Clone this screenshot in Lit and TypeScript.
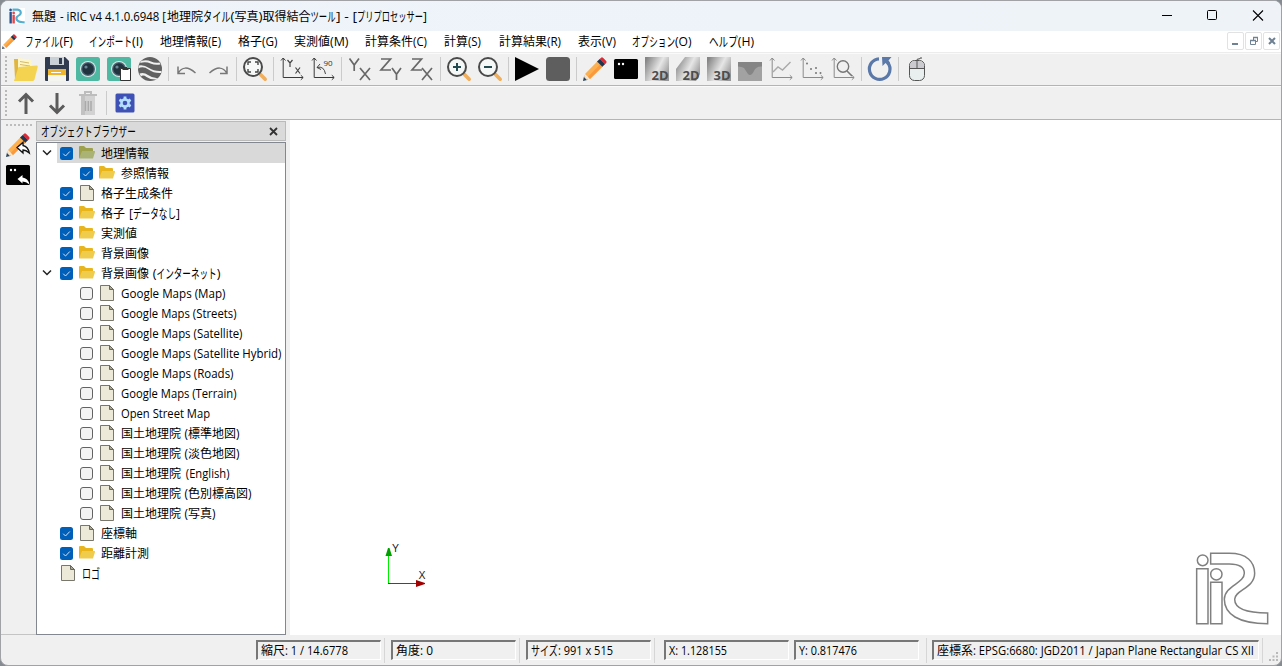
import { LitElement, html, svg, css, nothing, TemplateResult } from 'lit';
import { customElement } from 'lit/decorators.js';

type Run = [string, number, number]; // text, x, width

const isKanji = (c: string) => /[\u4e00-\u9fff]/.test(c);
const isKana = (c: string) => /[\u3040-\u30ff]/.test(c);

/** Splits a label by script, so that kana is set tighter than kanji. */
function runsOf(text: string, total: number, kana = 8.6): Run[] {
  const parts: { t: string; k: number }[] = [];
  for (const c of text) {
    const k = isKanji(c) ? 0 : isKana(c) ? 1 : 2;
    const last = parts[parts.length - 1];
    if (last && last.k === k) last.t += c;
    else parts.push({ t: c, k });
  }
  const count = (k: number) => parts.filter((p) => p.k === k).reduce((n, p) => n + p.t.length, 0);
  const rest = total - count(0) * 12;
  const latin = count(2);
  const kanaW = latin ? kana : rest / (count(1) || 1);
  const latinW = latin ? (rest - count(1) * kanaW) / latin : 0;
  let x = 0;
  return parts.map((p) => {
    const w = p.t.length * (p.k === 0 ? 12 : p.k === 1 ? kanaW : latinW);
    const lead = p.t.startsWith(' ') ? latinW : 0;
    const trail = p.t.endsWith(' ') ? latinW : 0;
    const r: Run = [p.t.trim(), x + lead, w - lead - trail];
    x += w;
    return r;
  });
}

function label(runs: Run[], width: number) {
  return html`<svg class="label" width=${width + 2} height="20">
    ${runs.map(([t, x, w]) => isKana(t[0])
      ? svg`<text class="kana" transform="translate(${x} 14.7) scale(${w / (t.length * 13)} 1)">${t}</text>`
      : svg`<text x=${x} y="14.5" textLength=${w} lengthAdjust="spacingAndGlyphs">${t}</text>`)}
  </svg>`;
}
const fit = (text: string, width: number, kana?: number) => label(runsOf(text, width, kana), width);

const pencil = svg`<g><path d="M0 24 1.2 18.6 5.2 22.8Z" fill="#2c4358"/><path d="M1.6 17.4 6.4 22.2 3.8 22.9 1 20Z" fill="#f5e3c8"/>
  <path d="M2 17 14.5 4.2 19.6 9.4 7 22Z" fill="#fcb04f"/><path d="M5 19.8 17.2 7.2 19.6 9.4 7 22Z" fill="#fa9a3c"/>
  <path d="M14 4.6 17 1.8 22.2 7 19.4 9.8Z" fill="#20344e"/><path d="M16.8 2 18 .8Q19-.2 20 .8L23.2 4Q24 5 23.2 6L22 7.2Z" fill="#dc2b37"/></g>`;
const terminal = svg`<rect y="2" width="24" height="20" rx="1.5" fill="#000"/><circle cx="5" cy="7" r="1.2" fill="#fff"/><circle cx="9" cy="7" r="1.2" fill="#fff"/>`;
const camera = svg`<rect width="24" height="24" rx="2.5" fill="#4fb8a2"/><circle cx="12" cy="12" r="8" fill="#dce8e8"/><circle cx="12" cy="12" r="7" fill="#4d6777"/><circle cx="12" cy="12" r="5.7" fill="#20333f"/><circle cx="10" cy="10" r="1.6" fill="#6b8796"/>`;
const lens = svg`<path d="m17 17 5.200 5.200" stroke="#f1ae5b" stroke-width="3.6" stroke-linecap="round"/><circle cx="10" cy="10" r="9" fill="#f6f8f8" stroke="#4a4a4a" stroke-width="2"/>`;
const axes = (c: string) => svg`<path d="M3.2 1V20.500H23M1 3.500 3.200 1 5.500 3.500M20.800 18.200 23.200 20.500 20.800 22.800" fill="none" stroke=${c} stroke-width="1"/>`;
const replyOutline = svg`<path d="M11 14.500 17 9.500V12.500Q22 13.500 23.300 20Q20 17 17 17V20Z" fill="#fff" stroke="#111" stroke-width="1.300"/>`;
const letters = (a: string, b: string) => svg`
  ${a === 'Y' ? svg`<path d="M1.500 1.500 6.200 8 11 1.500M6.200 8V14"/>` : svg`<path d="M2 2H11.500L2 13H12"/>`}
  ${b === 'X' ? svg`<path d="M12 11 22 23M22 11 12 23"/>` : svg`<path d="M13 11 17.500 17.200 22 11M17.500 17V23"/>`}`;
const cube = (t: string, shape: string) => svg`<path d=${shape} fill="url(#metal)"/>
  <text x="6.500" y="23.200" textLength="17" lengthAdjust="spacingAndGlyphs" class="dim">${t}</text>`;

const ICONS: Record<string, TemplateResult> = {
  open: svg`<path d="M0 2H7L9 5H15V22H1Z" fill="#e0b63f"/><path d="M4 1 17 3 20 19H4Z" fill="#fff6c5"/><path d="M6 4.500 15 6M6 7.500 16 9" stroke="#d5b96a"/><path d="M0 24 4.500 10 23 8.500Q24 8.500 23.700 10L20.500 22.500Q20 24 18 24Z" fill="#f3d34f"/>`,
  save: svg`<path d="M0 1Q0 0 1 0H20L24 4V23Q24 24 23 24H1Q0 24 0 23Z" fill="#303b50"/><path d="M5 0H19V8H5Z" fill="#c9d0d6"/><path d="M14 1H17V7H14Z" fill="#303b50"/><path d="M3 12H21V24H3Z" fill="#f5f5f0"/><path d="M3 12H21V18H3Z" fill="#efb52d"/><path d="M6 15.500H16" stroke="#fff"/>`,
  cam: camera,
  camdoc: svg`${camera}<path d="M13.500 11.500H23.500V23.500H13.500Z" fill="#fff" stroke="#333"/><path d="M15.500 11H21.500V13H15.500ZM17 10H20V11H17Z" fill="#333"/>`,
  globe: svg`<circle cx="12" cy="12" r="12" fill="#616161"/><path d="M3.500 3.800Q9 2.500 13 4.500T21.500 5.500L22.500 7.500Q17 8.500 12.500 6.500T2 6Z" fill="#f0f0f0"/><path d="M.7 8.500Q6 7.500 11 11T23.500 14L23.200 16Q16 16.500 10.500 12.500T.3 11.500Z" fill="#f0f0f0"/><path d="M1.500 16.500Q6 15 10 18T19.500 21.200L17.500 22.600Q12 22.500 8.500 20T3 19.500Z" fill="#f0f0f0"/>`,
  undo: svg`<path d="M3 16.500Q9 6 20.500 16M3 9.500V16.500H10" fill="none" stroke="#777" stroke-width="1.500"/>`,
  redo: svg`<path d="M21 16.500Q15 6 3.500 16M21 9.500V16.500H14" fill="none" stroke="#777" stroke-width="1.500"/>`,
  fit: svg`${lens}<path d="M5 8V5H8M12 5H15V8M15 12V15H12M8 15H5V12" fill="none" stroke="#444" stroke-width="1.400"/>`,
  axis: svg`${axes('#3a3a3a')}<path d="M7.500 3 10 6 12.500 3M10 6V10M15.500 10.500 20 16.500M20 10.500 15.500 16.500" fill="none" stroke="#444" stroke-width="1.200"/>`,
  rot: svg`${axes('#3a3a3a')}<path d="M6 10.500Q13 8.500 14.500 17M9 7 6 10.500 10 12.500" fill="none" stroke="#444"/><text x="12.500" y="9" class="deg">90</text>`,
  yx: svg`<g class="axl">${letters('Y', 'X')}</g>`,
  zy: svg`<g class="axl">${letters('Z', 'Y')}</g>`,
  zx: svg`<g class="axl">${letters('Z', 'X')}</g>`,
  zin: svg`${lens}<path d="M6 10H14M10 6V14" stroke="#244b50" stroke-width="2"/>`,
  zout: svg`${lens}<path d="M6 10H14" stroke="#244b50" stroke-width="2"/>`,
  play: svg`<path d="M0 0 24 12 0 24Z" fill="#000"/>`,
  stop: svg`<rect width="24" height="24" rx="3.500" fill="#5e5e5e"/>`,
  pencil,
  term: terminal,
  d2: cube('2D', 'M0 0H24V24H0Z'),
  d2b: cube('2D', 'M9 0H24V17L20 24H0V12Z'),
  d3: cube('3D', 'M0 0H24V24H0Z'),
  profile: svg`<rect y="5" width="24" height="19" fill="#a2a2a2"/><path d="M0 5H24V9.500Q18 9 16 14Q13 20 10 17Q8 14 6 11Q4 9.500 0 9.500Z" fill="#858585"/>`,
  line: svg`${axes('#8b8b8b')}<path d="M4 15 9 10 13.500 13 21.500 5" fill="none" stroke="#aaa" stroke-width="1.400"/>`,
  dots: svg`${axes('#8b8b8b')}<g fill="#777"><circle cx="7" cy="6.500" r="1"/><circle cx="11" cy="12" r="1"/><circle cx="16" cy="11" r="1"/><circle cx="16" cy="16" r="1"/><circle cx="20.500" cy="16" r="1"/></g>`,
  look: svg`${axes('#8b8b8b')}<circle cx="12" cy="9.500" r="5.700" fill="none" stroke="#777" stroke-width="1.400"/><path d="m16 14 5 5" stroke="#777" stroke-width="1.600"/>`,
  reload: svg`<path d="M11 1.800A10.300 10.300 0 1 0 20 6" fill="none" stroke="#5a78a8" stroke-width="3.200"/><path d="M14 0H23.500L20.500 3.500 22 5.500 19.500 8 17.500 6 14.500 9Z" fill="#5a78a8"/>`,
  mouse: svg`<path d="M12 4V3Q12 2 13 2H14Q15 2 15 1H17" fill="none" stroke="#444"/><rect x="4.500" y="3.500" width="15" height="20" rx="5" fill="#e8efee" stroke="#555"/><path d="M5 11V8Q6 4 10 4H14Q18 4 19 8V11Z" fill="#cbcbcf"/><path d="M4.500 11.500H19.500M12 4V11" stroke="#555"/>`,
  up: svg`<path d="M12 23V4M5 10.500 12 3.500 19 10.500" fill="none" stroke="#5b5b5b" stroke-width="3"/>`,
  down: svg`<path d="M12 2V21M5 14.500 12 21.500 19 14.500" fill="none" stroke="#5b5b5b" stroke-width="3"/>`,
  trash: svg`<path d="M5 5H19V24H5Z" fill="#d2d2d2"/><path d="M5 5H9V24H5Z" fill="#c2c2c2"/><path d="M3 4H21M9 3.500V1H15V3.500" fill="none" stroke="#bdbdbd" stroke-width="2"/><path d="M9.500 10V20M12.300 10V20M15 10V20" stroke="#aaa" stroke-width="1.500"/>`,
  gear: svg`<rect x="2.500" y="2.500" width="19" height="19" rx="1.500" fill="#3f51b5"/><path d="M12 5.500V18.500M6.400 8.750 17.600 15.250M17.600 8.750 6.400 15.250" stroke="#b3e0ff" stroke-width="2.800"/><circle cx="12" cy="12" r="4.800" fill="#b3e0ff"/><circle cx="12" cy="12" r="2.300" fill="#3f51b5"/>`,
  pencilBack: svg`${pencil}${replyOutline}`,
  termBack: svg`${terminal}<path d="M11.500 16 16.500 12V14.500Q22 15 23.500 21.500Q20 18.500 16.500 18.500V20.500Z" fill="#fff"/>`,
};

const BAR1 = ['open', 'save', 'cam', 'camdoc', 'globe', '|', 'undo', 'redo', '|', 'fit', '|', 'axis', 'rot', '|', 'yx', 'zy', 'zx', '|', 'zin', 'zout', '|', 'play', 'stop', '|', 'pencil', 'term', 'd2', 'd2b', 'd3', 'profile', 'line', 'dots', 'look', '|', 'reload', '|', 'mouse'];
const BAR2 = ['up', 'down', 'trash', '|', 'gear'];

// label, width, gap to the next entry, kana advance
const MENUS: [string, number, number, number?][] = [
  ['ファイル(F)', 48, 16], ['インポート(I)', 54, 17], ['地理情報(E)', 61, 16.5], ['格子(G)', 39.500, 16.500], ['実測値(M)', 54.500, 17], ['計算条件(C)', 62, 17],
  ['計算(S)', 37, 17.500], ['計算結果(R)', 62, 17], ['表示(V)', 38, 16.500], ['オプション(O)', 59.500, 17], ['ヘルプ(H)', 45, 0, 9.6],
];

interface Node { t: string; w: number; d: number; icon: 'folder' | 'file'; check?: boolean; open?: boolean; sel?: boolean }
const TREE: Node[] = [
  { t: '地理情報', w: 48, d: 0, icon: 'folder', check: true, open: true, sel: true },
  { t: '参照情報', w: 48, d: 1, icon: 'folder', check: true },
  { t: '格子生成条件', w: 72, d: 0, icon: 'file', check: true },
  { t: '格子 [データなし]', w: 79, d: 0, icon: 'folder', check: true },
  { t: '実測値', w: 36, d: 0, icon: 'folder', check: true },
  { t: '背景画像', w: 48, d: 0, icon: 'folder', check: true },
  { t: '背景画像 (インターネット)', w: 119.500, d: 0, icon: 'folder', check: true, open: true },
  { t: 'Google Maps (Map)', w: 104.500, d: 1, icon: 'file', check: false },
  { t: 'Google Maps (Streets)', w: 115.500, d: 1, icon: 'file', check: false },
  { t: 'Google Maps (Satellite)', w: 121.500, d: 1, icon: 'file', check: false },
  { t: 'Google Maps (Satellite Hybrid)', w: 160.500, d: 1, icon: 'file', check: false },
  { t: 'Google Maps (Roads)', w: 112.500, d: 1, icon: 'file', check: false },
  { t: 'Google Maps (Terrain)', w: 115.500, d: 1, icon: 'file', check: false },
  { t: 'Open Street Map', w: 89, d: 1, icon: 'file', check: false },
  { t: '国土地理院 (標準地図)', w: 118.500, d: 1, icon: 'file', check: false },
  { t: '国土地理院 (淡色地図)', w: 118.500, d: 1, icon: 'file', check: false },
  { t: '国土地理院 (English)', w: 108.500, d: 1, icon: 'file', check: false },
  { t: '国土地理院 (色別標高図)', w: 130.500, d: 1, icon: 'file', check: false },
  { t: '国土地理院 (写真)', w: 94.500, d: 1, icon: 'file', check: false },
  { t: '座標軸', w: 36, d: 0, icon: 'file', check: true },
  { t: '距離計測', w: 48, d: 0, icon: 'folder', check: true },
  { t: 'ロゴ', w: 18, d: 0, icon: 'file' },
];

const TITLE: Run[] = [
  ['無題', 0, 24], ['- iRIC v4 4.1.0.6948 [', 28, 106], ['地理院', 135, 36], ['タイル', 171, 27.5], ['(', 198.500, 4], ['写真', 202.500, 24], [')', 226.500, 4],
  ['取得結合', 230.500, 48], ['ツール', 278.500, 25], ['] - [', 304, 21], ['プリプロセッサー', 325, 66], [']', 391, 4],
];

const LOGO_R = 'M92 40H148C200 40 224 65 224 100C224 145 164 150 164 178C164 205 200 219 263 219V251C175 251 133 222 133 178C133 138 193 130 193 100C193 80 175 72 148 72H92Z';

@customElement('app-root')
export class AppRoot extends LitElement {
  static styles = css`
    :host { display: block; width: 1282px; height: 666px; overflow: hidden; background: #858b91;
      font-family: "Open Sans", "Noto Sans CJK JP", sans-serif; font-size: 12px; color: #000; }
    * { box-sizing: border-box; }
    svg { display: block; flex: none; }
    .label { overflow: visible; }
    .label text { font-size: 12px; fill: currentColor; white-space: pre; }
    .label .kana { font-size: 13px; }
    .window { width: 1282px; height: 666px; border: 1px solid #a0a2a5; border-radius: 8px; background: #f0f0f0; display: flex; flex-direction: column; overflow: hidden; }
    .title { height: 30px; flex: none; background: linear-gradient(90deg, #eef4f8, #edf3f9 60%, #eff3f8); display: flex; align-items: center; padding: 0 5px 1px 8px; }
    .title .label { margin: 0 auto 0 6.500px; }
    .menu { height: 22px; flex: none; background: #fff; border-bottom: 1px solid #ececec; display: flex; align-items: center; padding: 0 0 1px 1px; }
    .menu .first { margin-right: 8px; }
    .entry { display: flex; margin-right: calc(var(--g) * 1px - 2px); }
    .mdi { display: flex; gap: 1px; margin-left: auto; padding-right: 1px; }
    .mdi svg { border: 1px solid #e2e2e2; border-radius: 2px; background: #fff; }
    .bar { height: 34px; flex: none; border-bottom: 1px solid #b4b4b4; border-top: 1px solid #fafafa; display: flex; align-items: center; padding-left: 4px; }
    .bar.one { height: 33px; padding-bottom: 1px; }
    .grip { width: 2px; height: 26px; margin-right: 4px; background: repeating-linear-gradient(180deg, #b8b8b8 0 2px, transparent 2px 4px); }
    .tool { width: 31px; padding-left: 3px; flex: none; }
    .sep { width: 1px; height: 24px; background: #cbcbcb; margin: 0 3px 0 2px; flex: none; }
    .axl path { fill: none; stroke: #686868; stroke-width: 1.700; }
    .dim { font: bold 13px "Open Sans", sans-serif; fill: #4d4d4d; }
    .deg { font: 8px "Open Sans", sans-serif; fill: #333; }
    .main { flex: 1; display: flex; min-height: 0; }
    .side { width: 35px; flex: none; padding: 5px 0 0 5px; border-bottom: 1px solid #c4c4c4; }
    .hgrip { width: 26px; height: 2px; background: repeating-linear-gradient(90deg, #bcbcbc 0 2px, transparent 2px 4px); margin: -1px 0 7px 0; }
    .side .ic { margin-bottom: 6px; }
    .dock { width: 250px; flex: none; display: flex; flex-direction: column; padding-top: 1px; }
    .dockhead { height: 20px; background: #dadada; border: 1px solid #bababa; display: flex; align-items: center; justify-content: space-between; padding: 0 7px 0 4px; margin-bottom: 1px; }
    .tree { flex: 1; border: 1px solid #828790; background: #fff; }
    .row { height: 20px; display: flex; align-items: center; }
    .exp { width: 20px; display: flex; justify-content: center; padding-right: 1px; }
    .cell { flex: 1; height: 20px; display: flex; align-items: center; padding-left: 3px; }
    .cell.child { padding-left: 23px; }
    .cell.sel { background: #d9d9d9; }
    .box { margin-right: 5px; }
    .node { margin-right: 5px; }
    .bare .node { margin-right: 5px; margin-left: -1px; }
    .canvas { flex: 1; margin-left: 4px; background: #fff; position: relative; }
    .gizmo { position: absolute; left: 90px; top: 420px; }
    .gizmo text { font: 10.500px "Liberation Sans", sans-serif; fill: #222; }
    .logo { position: absolute; right: 0; bottom: 0; }
    .status { height: 30px; flex: none; display: flex; align-items: center; padding-left: 255px; }
    .field { height: 20px; margin-bottom: 1px; border: 2px solid; border-color: #777 #fff #fff #777; border-right-width: 1px; border-bottom-width: 1px; display: flex; align-items: center; padding-left: 3px; flex: none; width: 125px; }
    .field.wide { width: 327px; }
    .field.near { margin-left: 3px; }
    .field.next { margin-left: 5px; }
    .line { width: 1px; height: 25px; background: #d6d6d6; margin: 0 6px 0 3px; flex: none; }
    .line.l2 { margin-left: 7px; margin-right: 5px; }
    .size { margin: 13px 0 0 0; }
  `;

  private icon(name: string, size = 24) {
    return html`<svg class="ic" width=${size} height=${size} viewBox="0 0 24 24" overflow="visible">
      <defs><linearGradient id="metal" x1="0" y1=".2" x2="1" y2=".7"><stop offset="0" stop-color="#858585"/><stop offset=".55" stop-color="#e6e6e6"/><stop offset="1" stop-color="#969696"/></linearGradient></defs>
      ${ICONS[name]}</svg>`;
  }

  private bar(items: string[], cls: string) {
    return html`<div class="bar ${cls}"><div class="grip"></div>
      ${items.map((i) => (i === '|' ? html`<div class="sep"></div>` : html`<div class="tool">${this.icon(i)}</div>`))}</div>`;
  }

  private checkbox(on: boolean) {
    return html`<svg class="box" width="13" height="13">${on
      ? svg`<rect width="13" height="13" rx="2.500" fill="#005fb8"/><path d="M3.200 6.700 5.500 9 9.800 4.500" fill="none" stroke="#cfe2f5" stroke-width="1"/>`
      : svg`<rect x=".5" y=".5" width="12" height="12" rx="2.500" fill="#f3f3f3" stroke="#626262"/>`}</svg>`;
  }

  private nodeIcon(n: Node) {
    if (n.icon === 'folder') {
      const [a, b] = n.sel ? ['#9da14b', '#aab373'] : ['#e9b51c', '#efcc4c'];
      return html`<svg class="node" width="18" height="16"><path d="M1 2Q1 1 2 1H6L8 3H14Q15 3 15 4V13H1Z" fill=${a}/><path d="M1 13.500 4 6H16.500Q17.300 6 17 7L15 13.500Z" fill=${b}/></svg>`;
    }
    return html`<svg class="node" width="18" height="18"><path d="M2.500 1.500H11.500L15.500 5.500V16.500H2.500Z" fill="#ece9d8" stroke="#77776d"/><path d="M11.500 1.500V5.500H15.500Z" fill="#aaa894" stroke="#66665d"/></svg>`;
  }

  private row(n: Node) {
    return html`<div class="row ${n.check === undefined ? 'bare' : ''}">
      <div class="exp">${n.open ? html`<svg width="10" height="8"><path d="M1 1.500 5 5.500 9 1.500" fill="none" stroke="#222" stroke-width="1.500"/></svg>` : nothing}</div>
      <div class="cell ${n.d ? 'child' : ''} ${n.sel ? 'sel' : ''}">
        ${n.check === undefined ? nothing : this.checkbox(n.check)}${this.nodeIcon(n)}${fit(n.t, n.w)}
      </div></div>`;
  }

  render() {
    return html`<div class="window">
      <div class="title">
        <svg width="16" height="16" viewBox="44 34 224 224"><rect x="44" y="34" width="224" height="224" fill="#fff"/><path d=${LOGO_R} fill="#55aecd"/><g fill="#24528e"><circle cx="66" cy="61" r="19"/><path d="M50 86H84V251H50Z"/></g><g fill="#e34a50"><circle cx="109" cy="103" r="19"/><path d="M92 127H126V251H92Z"/></g></svg>
        ${label(TITLE, 396)}
        <svg width="120" height="29"><path d="M6 14.500H16" stroke="#000"/><rect x="51.500" y="9.500" width="9" height="9" rx="1" fill="none" stroke="#000"/><path d="M97 9.500 107 19.500M107 9.500 97 19.500" stroke="#000" stroke-width="1.100"/></svg>
      </div>
      <div class="menu"><div class="first">${this.icon('pencil', 15)}</div>
        ${MENUS.map(([t, w, g, k]) => html`<div class="entry" style="--g:${g}">${fit(t, w, k)}</div>`)}
        <div class="mdi">
          <svg width="17" height="18"><path d="M4 11H10" stroke="#6f8294" stroke-width="2"/></svg>
          <svg width="17" height="18"><path d="M4.500 7.500H9.500V11.500H4.500ZM7.500 7V4.500H11.500V8.500H10" fill="none" stroke="#6f8294"/><path d="M4 7.500H10M7 4.500H12" stroke="#6f8294" stroke-width="1.600"/></svg>
          <svg width="17" height="18"><path d="M5 5 11 11M11 5 5 11" stroke="#6f8294" stroke-width="2"/></svg>
        </div>
      </div>
      ${this.bar(BAR1, 'one')}
      ${this.bar(BAR2, 'two')}
      <div class="main">
        <div class="side"><div class="hgrip"></div>${this.icon('pencilBack')}${this.icon('termBack')}</div>
        <div class="dock">
          <div class="dockhead">${fit('オブジェクトブラウザー', 95)}<svg width="9" height="9"><path d="M1 1 8 8M8 1 1 8" stroke="#333" stroke-width="1.800"/></svg></div>
          <div class="tree">${TREE.map((n) => this.row(n))}</div>
        </div>
        <div class="canvas">
          <svg class="gizmo" width="60" height="60"><path d="M8.500 43V14" stroke="#0e0" /><path d="M8 43.500H38" stroke="#e00"/><path d="M5.500 16 8 8H9.500L12 16Z" fill="#00a000"/><path d="M36 40 45 43V44L36 47Z" fill="#a00000"/><text x="12" y="12">Y</text><text x="38.500" y="39">X</text></svg>
          <svg class="logo" width="101" height="95" viewBox="0 0 303 285"><g fill="#fff" stroke="#808080" stroke-width="4.500"><circle cx="68" cy="61" r="16"/><path d="M50 86H84V251H50Z"/><circle cx="109" cy="103" r="17"/><path d=${LOGO_R} /><path d="M92 127H126V251H92Z"/></g></svg>
        </div>
      </div>
      <div class="status">
        <div class="field">${label([['縮尺', 0, 24], [': 1 / 14.6778', 24, 63]], 87)}</div><div class="line"></div>
        <div class="field">${label([['角度', 0, 24], [': 0', 24, 13]], 37)}</div><div class="line"></div>
        <div class="field">${label([['サイズ', 0, 27], [': 991 x 515', 27, 55]], 82)}</div><div class="line"></div>
        <div class="field near">${fit('X: 1.128155', 58)}</div>
        <div class="field next">${fit('Y: 0.817476', 58)}</div><div class="line l2"></div>
        <div class="field wide">${label([['座標系', 0, 36], [': EPSG:6680: JGD2011 / Japan Plane Rectangular CS XII', 36, 281]], 317)}</div><div class="line"></div>
        <svg class="size" width="10" height="10"><path d="M7 0h2v2h-2zM3.500 3.500h2v2h-2zM7 3.500h2v2h-2zM0 7h2v2h-2zM3.500 7h2v2h-2zM7 7h2v2h-2z" fill="#b8b8b8"/></svg>
      </div>
    </div>`;
  }
}
